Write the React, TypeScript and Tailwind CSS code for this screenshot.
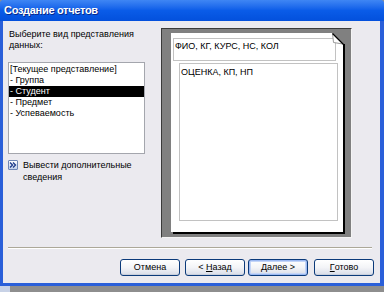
import React from "react";

function Btn({ w, children, focus }: { w: string; children: React.ReactNode; focus?: boolean }) {
  return (
    <div
      className={
        w +
        " h-[17px] flex items-center justify-center rounded-[3px] border border-[#0b3a7a] bg-gradient-to-b from-[#ffffff] via-[#f3f4f7] to-[#d8dce8] text-[9px] leading-none whitespace-pre " +
        (focus
          ? "shadow-[inset_0_0_0_1px_#9cb9f2,inset_0_0_0_2px_#c4d5f7]"
          : "shadow-[inset_0_-1px_0_#c9cfdc]")
      }
    >
      {children}
    </div>
  );
}

export default function App() {
  return (
    <div className="w-[384px] h-[292px] overflow-hidden bg-[#8e8e8e] flex flex-col font-['Liberation_Sans',Arial,sans-serif] text-[9px] leading-[11.3px] text-black">
      <div className="h-[286px] flex flex-col">
        {/* Title bar */}
        <div className="h-[21px] shrink-0 flex items-center px-[4px] bg-gradient-to-b from-[#3f86f4] via-[#0a5ce8] to-[#0350dc] rounded-t-[3px]">
          <span className="text-white font-bold text-[11px] tracking-[-0.3px] [text-shadow:1px_1px_0_#0a2a8a]">
            Создание отчетов
          </span>
        </div>
        {/* Body */}
        <div className="flex-1 flex flex-col bg-[#ebeaef] border-l-[3px] border-r-[4px] border-b-[3px] border-[#2a5fd9]">
          <div className="flex pt-[7px] pl-[5px]">
            {/* Left column */}
            <div className="w-[137px] flex flex-col pt-[1px]">
              <div className="pl-[1px]">
                Выберите вид представления
                <br />
                данных:
              </div>
              <div className="mt-[10px] h-[92px] border border-[#a4a6ad] bg-white pt-[1px]">
                <div className="h-[11px] leading-[11px] pl-[1px]">[Текущее представление]</div>
                <div className="h-[11px] leading-[11px] pl-[1px]">- Группа</div>
                <div className="h-[11px] leading-[11px] pl-[1px] bg-black text-white">- Студент</div>
                <div className="h-[11px] leading-[11px] pl-[1px]">- Предмет</div>
                <div className="h-[11px] leading-[11px] pl-[1px]">- Успеваемость</div>
              </div>
              <div className="mt-[5px] flex items-start gap-[5px]">
                <div className="w-[10px] h-[10px] mt-[1px] shrink-0 rounded-[1px] border border-[#6f86b5] bg-gradient-to-b from-white to-[#c2d0ea] flex items-center justify-center">
                  <svg width="8" height="8" viewBox="0 0 8 8">
                    <path d="M1 1.5 L3.5 4 L1 6.5 M4 1.5 L6.5 4 L4 6.5" fill="none" stroke="#1d3a8a" strokeWidth="1.3" />
                  </svg>
                </div>
                <div className="leading-[12.5px]">
                  Вывести дополнительные
                  <br />
                  сведения
                </div>
              </div>
            </div>
            {/* Preview frame */}
            <div className="ml-[16px] w-[191px] h-[210px] bg-[#808080] border-t border-l border-[#3a3a3a] border-r-[#f4f4f4] border-b-[#f4f4f4] border-r border-b pt-[4px] pl-[9px]">
              <div className="relative w-[172px] h-[199px] bg-white shadow-[2px_2px_0_0_#000] pt-[5px] pl-[2px] flex flex-col">
                <div className="w-[163px] h-[23px] border border-[#c2c2c2] pl-[1px] pt-[2px]">
                  ФИО, КГ, КУРС, НС, КОЛ
                </div>
                <div className="mt-[2px] ml-[6px] w-[159px] h-[158px] border border-[#c2c2c2] pl-[1px] pt-[3px]">
                  ОЦЕНКА, КП, НП
                </div>
                <svg className="absolute top-0 right-[-2px]" width="13" height="13" viewBox="0 0 13 13">
                  <polygon points="0,0 13,0 13,11 11,11" fill="#808080" />
                  <rect x="11" y="11" width="2" height="2" fill="#000" />
                  <polygon points="0.5,0.5 1.5,9.5 11,11" fill="#fff" stroke="#9a9a9a" strokeWidth="1" />
                  <line x1="0.5" y1="0.5" x2="11.5" y2="11.5" stroke="#000" strokeWidth="1.2" />
                </svg>
              </div>
            </div>
          </div>
          {/* Separator */}
          <div className="mt-[9px] ml-[5px] mr-[8px] h-[2px] border-t border-[#aca899] border-b border-b-white" />
          {/* Buttons */}
          <div className="mt-[10px] flex justify-end pr-[6px]">
            <Btn w="w-[60px]">Отмена</Btn>
            <div className="w-[5px]" />
            <Btn w="w-[60px]">
              {"< "}
              <span className="underline">Н</span>
              {"азад"}
            </Btn>
            <div className="w-[3px]" />
            <Btn w="w-[60px]" focus>
              <span className="underline">Д</span>
              {"алее >"}
            </Btn>
            <div className="w-[6px]" />
            <Btn w="w-[60px]">
              <span className="underline">Г</span>
              {"отово"}
            </Btn>
          </div>
        </div>
      </div>
      <div className="flex-1 flex">
        <div className="w-[10px] bg-[#c8d2e6]" />
        <div className="flex-1 bg-[#8e8e8e]" />
      </div>
    </div>
  );
}
